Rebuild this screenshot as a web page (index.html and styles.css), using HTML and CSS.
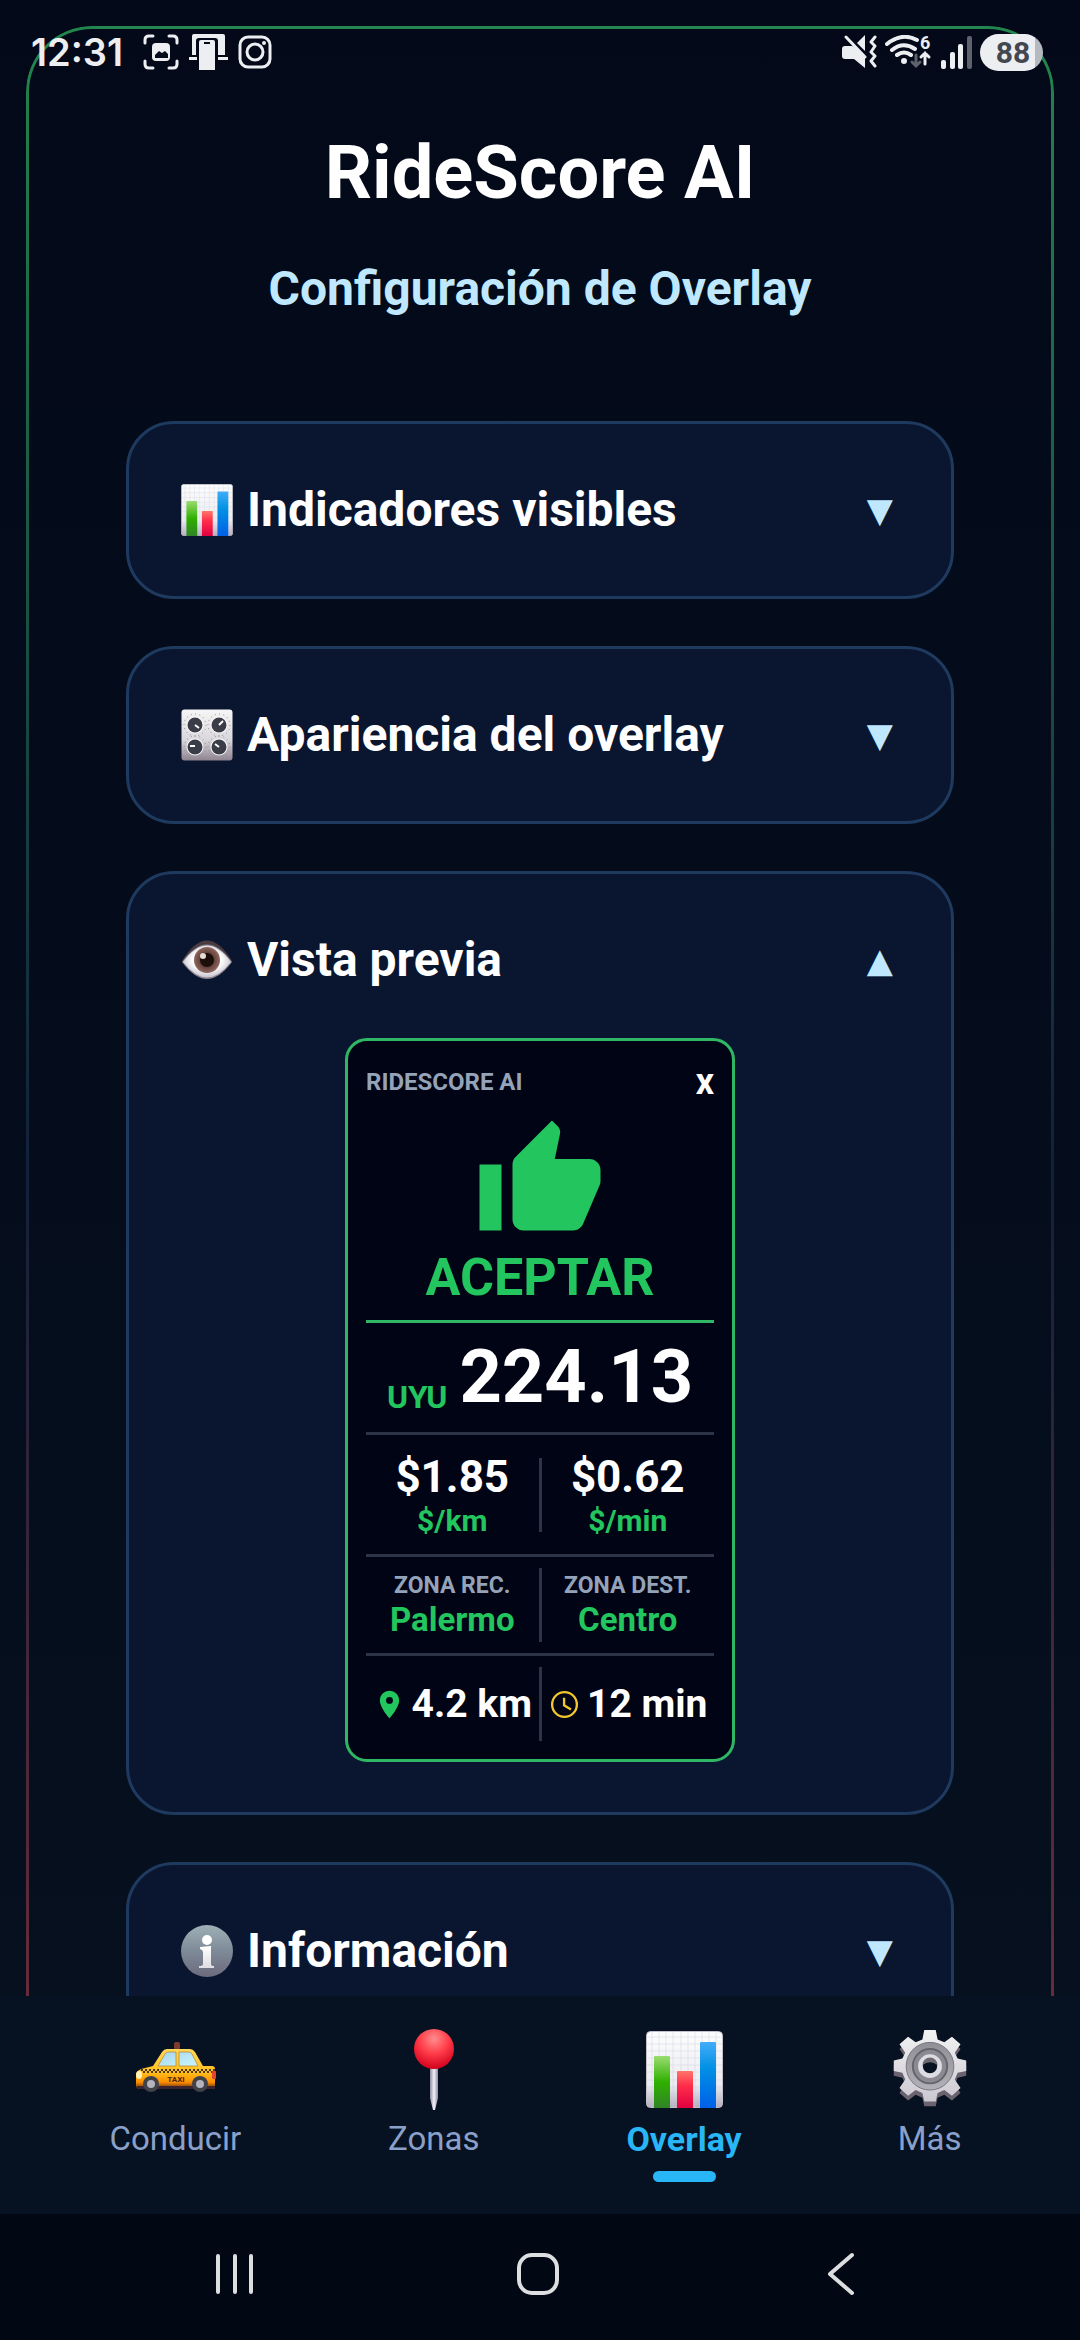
FILE: index.html
```
<!DOCTYPE html>
<html lang="es">
<head>
    <meta charset="UTF-8">
    <meta name="viewport" content="width=device-width, initial-scale=1.0">
    <title>RideScore AI</title>
    <link rel="stylesheet" href="styles.css">
</head>
<body>
    <!-- Iconos compartidos -->
    <svg class="sprite" aria-hidden="true">
        <defs>
            <linearGradient id="paper" x1="0" y1="0" x2="0" y2="1">
                <stop offset="0" stop-color="#fdfdfd"/><stop offset="0.7" stop-color="#ececf0"/><stop offset="1" stop-color="#b5adbd"/>
            </linearGradient>
            <linearGradient id="barGreen" x1="0" y1="0" x2="0" y2="1">
                <stop offset="0" stop-color="#9bdc70"/><stop offset="0.5" stop-color="#2fb000"/><stop offset="1" stop-color="#2f8426"/>
            </linearGradient>
            <linearGradient id="barRed" x1="0" y1="0" x2="0" y2="1">
                <stop offset="0" stop-color="#ff756a"/><stop offset="0.4" stop-color="#ff2d4a"/><stop offset="1" stop-color="#e00040"/>
            </linearGradient>
            <linearGradient id="barBlue" x1="0" y1="0" x2="0" y2="1">
                <stop offset="0" stop-color="#43adf8"/><stop offset="0.4" stop-color="#0090e4"/><stop offset="1" stop-color="#0060e8"/>
            </linearGradient>
            <linearGradient id="metal" x1="0" y1="0" x2="0" y2="1">
                <stop offset="0" stop-color="#f6f6f6"/><stop offset="0.6" stop-color="#d9d7dc"/><stop offset="1" stop-color="#8e8290"/>
            </linearGradient>
            <linearGradient id="gearFace" x1="0" y1="0" x2="0" y2="1">
                <stop offset="0" stop-color="#f2f2f2"/><stop offset="1" stop-color="#cbc8d2"/>
            </linearGradient>
            <linearGradient id="infoBg" x1="0" y1="0" x2="0" y2="1">
                <stop offset="0" stop-color="#9fb0b6"/><stop offset="0.5" stop-color="#7e8a98"/><stop offset="1" stop-color="#6c6a7c"/>
            </linearGradient>
            <linearGradient id="infoFg" x1="0" y1="0" x2="0" y2="1">
                <stop offset="0" stop-color="#ffffff"/><stop offset="1" stop-color="#dddde2"/>
            </linearGradient>
            <linearGradient id="taxiBody" x1="0" y1="0" x2="0" y2="1">
                <stop offset="0" stop-color="#ffd75a"/><stop offset="0.6" stop-color="#ffbf1c"/><stop offset="0.85" stop-color="#ff8e00"/><stop offset="1" stop-color="#6d3413"/>
            </linearGradient>
            <linearGradient id="glass" x1="0" y1="0" x2="1" y2="1">
                <stop offset="0" stop-color="#a6d4ea"/><stop offset="1" stop-color="#c9f6ff"/>
            </linearGradient>
            <radialGradient id="ball" cx="0.5" cy="0.25" r="0.75">
                <stop offset="0" stop-color="#ff8d8d"/><stop offset="0.5" stop-color="#ff3b48"/><stop offset="1" stop-color="#d0001c"/>
            </radialGradient>
            <linearGradient id="needle" x1="0" y1="0" x2="1" y2="0">
                <stop offset="0" stop-color="#8f8c9f"/><stop offset="0.5" stop-color="#f2f1fb"/><stop offset="1" stop-color="#8f8c9f"/>
            </linearGradient>
            <radialGradient id="eyeWhite" cx="0.5" cy="0.45" r="0.6">
                <stop offset="0.5" stop-color="#ffffff"/><stop offset="1" stop-color="#b9b4c2"/>
            </radialGradient>
            <radialGradient id="iris">
                <stop offset="0.4" stop-color="#54352f"/><stop offset="1" stop-color="#8f675e"/>
            </radialGradient>
            <linearGradient id="gearRing" x1="0" y1="0" x2="0" y2="1">
                <stop offset="0" stop-color="#8f8f95"/><stop offset="1" stop-color="#b2b0b8"/>
            </linearGradient>
        </defs>
        <symbol id="chart" viewBox="0 0 77 77">
            <rect x="0.5" y="0.5" width="76" height="76" rx="4" fill="url(#paper)" stroke="#c4c0ca"/>
            <path d="M6 1v75M13 1v75M20 1v75M27 1v75M35 1v75M42 1v75M49 1v75M56 1v75M63 1v75M70 1v75M1 6h75M1 13h75M1 20h75M1 27h75M1 34h75M1 41h75M1 49h75M1 56h75M1 63h75" stroke="#c5cbe0" stroke-width="0.7" opacity="0.6"/>
            <path d="M8 77V26q0-1 1-1h14q1 0 1 1v51z" fill="url(#barGreen)"/>
            <path d="M31 77V41q0-1 1-1h14q1 0 1 1v36z" fill="url(#barRed)"/>
            <path d="M54 77V12q0-1 1-1h14q1 0 1 1v65z" fill="url(#barBlue)"/>
        </symbol>
        <symbol id="knob" viewBox="0 0 24 24">
            <circle cx="12" cy="12" r="11" fill="none" stroke="#8d8a93" stroke-width="1" stroke-dasharray="1 3.300"/>
            <circle cx="12" cy="12" r="8.500" fill="#fafafa"/>
            <circle cx="12" cy="12" r="7.500" fill="#3a3d48"/>
        </symbol>
        <symbol id="gear" viewBox="0 0 82 82">
            <path d="M35 1h12l2 10 7 3 8-6 9 8-6 9 3 6 9 2v11l-9 2-3 7 6 9-9 8-8-6-7 3-2 9H35l-2-9-7-3-8 6-9-8 6-9-3-7-9-2V33l9-2 3-6-6-9 9-8 8 6 7-3z"/>
        </symbol>
    </svg>

    <div class="app">
        <header class="status-bar">
            <div class="status-left">
                <span class="clock">12:31</span>
                <svg width="36" height="36" viewBox="0 0 36 36" fill="none" stroke="#eceef2" stroke-width="3" stroke-linecap="round">
                    <path d="M2 9V6q0-4 4-4h4M26 2h4q4 0 4 4v3M34 27v3q0 4-4 4h-4M10 34H6q-4 0-4-4v-3"/>
                    <rect x="9" y="9" width="18" height="18" rx="4" fill="#eceef2" stroke="none"/>
                    <path d="M12 24v-3l4-4 3 2 3-2 3 3v4z" fill="#040b1a" stroke="none"/>
                </svg>
                <svg width="39" height="36" viewBox="0 0 39 36" fill="#eceef2">
                    <path d="M3 2q0-2 2-2h29q2 0 2 2v19h-7V7q0-3-3-3H10q-3 0-3 3v14H3zM0 23h8v3H0zM29 23h10v3H29z"/>
                    <path d="M10 8q0-2 2-2h12q2 0 2 2v28H10z"/>
                    <path d="M15 8h6v2h-6z" fill="#040b1a"/>
                </svg>
                <svg width="34" height="34" viewBox="0 0 34 34" fill="none" stroke="#eceef2" stroke-width="3">
                    <rect x="2" y="2" width="30" height="30" rx="8"/>
                    <circle cx="17" cy="17" r="8"/>
                    <circle cx="26" cy="8" r="2" fill="#eceef2" stroke="none"/>
                </svg>
            </div>
            <div class="status-right">
                <svg width="35" height="34" viewBox="0 0 35 34" fill="#eceef2">
                    <path d="M0 14q0-3 3-3h7l3 1 10 10v11l-11-9H3q-3 0-3-3zM15 8l8-8v16z"/>
                    <path d="M4 2l19 20" stroke="#eceef2" stroke-width="3" stroke-linecap="round"/>
                    <path d="M33 2l-4 5 4 4-4 6 4 4-4 5 4 5" fill="none" stroke="#eceef2" stroke-width="3" stroke-linecap="round" stroke-linejoin="round"/>
                </svg>
                <svg width="48" height="34" viewBox="0 0 48 34" fill="none" stroke="#eceef2" stroke-width="4" stroke-linecap="round">
                    <path d="M2 9Q17-3 32 5M7 15Q18 6 30 14M12 20Q19 15 26 20" />
                    <circle cx="19" cy="26" r="3" fill="#eceef2" stroke="none"/>
                    <path d="M31 20v10M27 27l4 4 4-4" stroke="#5d626d" stroke-width="3"/>
                    <path d="M40 29V18M36 22l4-4 4 4" stroke-width="3"/>
                    <text x="35" y="14" class="wifi-gen">6</text>
                </svg>
                <svg width="31" height="33" viewBox="0 0 31 33" fill="#eceef2">
                    <rect x="0" y="24" width="5" height="9" rx="2"/>
                    <rect x="9" y="16" width="5" height="17" rx="2"/>
                    <rect x="17" y="8" width="5" height="25" rx="2"/>
                    <rect x="26" y="0" width="5" height="33" rx="2" fill="#5d626d"/>
                </svg>
                <span class="battery">88</span>
            </div>
        </header>

        <main class="content">
            <h1>RideScore AI</h1>
            <h2 class="subtitle">Configuración de Overlay</h2>

            <section class="card">
                <button class="card-header" type="button" aria-expanded="false">
                    <svg class="card-icon"><use href="#chart"/></svg>
                    <span class="card-title">Indicadores visibles</span>
                    <span class="arrow">▼</span>
                </button>
            </section>

            <section class="card">
                <button class="card-header" type="button" aria-expanded="false">
                    <svg class="card-icon" viewBox="0 0 52 52">
                        <rect x="0.5" y="0.5" width="51" height="51" rx="3" fill="url(#metal)"/>
                        <use href="#knob" x="2" y="4" width="24" height="24"/>
                        <use href="#knob" x="26" y="4" width="24" height="24"/>
                        <use href="#knob" x="2" y="26" width="24" height="24"/>
                        <use href="#knob" x="26" y="26" width="24" height="24"/>
                        <path d="M14 16l4 3M38 16l4-4M14 37H9M38 38l-4-3" stroke="#fff" stroke-width="2"/>
                    </svg>
                    <span class="card-title">Apariencia del overlay</span>
                    <span class="arrow">▼</span>
                </button>
            </section>

            <section class="card">
                <button class="card-header" type="button" aria-expanded="true">
                    <svg class="card-icon" viewBox="0 0 52 52">
                        <path d="M1 27Q26-14 51 27Q26 62 1 27z" fill="#4a3b40"/>
                        <path d="M1 28Q26-7 51 28Q26 62 1 28z" fill="#85808c"/>
                        <path d="M2 28Q26-5 50 28Q26 59 2 28z" fill="url(#eyeWhite)"/>
                        <circle cx="26" cy="26" r="13" fill="url(#iris)"/>
                        <circle cx="26" cy="26" r="7" fill="#1c0f0a"/>
                        <circle cx="22" cy="22" r="3" fill="#e8dcd6"/>
                    </svg>
                    <span class="card-title">Vista previa</span>
                    <span class="arrow">▲</span>
                </button>

                <div class="preview">
                    <div class="preview-header">
                        <span class="brand">RIDESCORE AI</span>
                        <button class="close" type="button" aria-label="Cerrar">X</button>
                    </div>
                    <svg class="thumb" viewBox="0 0 24 24" fill="#22c55e">
                        <path d="M1 21h4V9H1v12zm22-11c0-1.100-.9-2-2-2h-6.310l.95-4.570.03-.32c0-.41-.17-.79-.44-1.060L14.170 1 7.590 7.590C7.220 7.950 7 8.450 7 9v10c0 1.100.9 2 2 2h9c.83 0 1.540-.5 1.840-1.220l3.020-7.050c.09-.23.14-.47.14-.73v-2z"/>
                    </svg>
                    <div class="verdict">ACEPTAR</div>
                    <div class="price">
                        <span class="currency">UYU</span>
                        <span class="amount">224.13</span>
                    </div>
                    <div class="row rates">
                        <div class="cell">
                            <div class="rate">$1.85</div>
                            <div class="unit">$/km</div>
                        </div>
                        <div class="cell">
                            <div class="rate">$0.62</div>
                            <div class="unit">$/min</div>
                        </div>
                    </div>
                    <div class="row zones">
                        <div class="cell">
                            <div class="zone-label">ZONA REC.</div>
                            <div class="zone-name">Palermo</div>
                        </div>
                        <div class="cell">
                            <div class="zone-label">ZONA DEST.</div>
                            <div class="zone-name">Centro</div>
                        </div>
                    </div>
                    <div class="row trip">
                        <div class="cell">
                            <svg width="33" height="33" viewBox="0 0 24 24" fill="#22c55e">
                                <path d="M12 2C8.130 2 5 5.130 5 9c0 5.250 7 13 7 13s7-7.750 7-13c0-3.870-3.130-7-7-7zm0 9.500a2.500 2.500 0 1 1 0-5 2.500 2.500 0 0 1 0 5z"/>
                            </svg>
                            <span>4.2 km</span>
                        </div>
                        <div class="cell">
                            <svg width="33" height="33" viewBox="0 0 24 24" fill="none" stroke="#f2c72e" stroke-width="1.700">
                                <circle cx="12" cy="12" r="9"/>
                                <path d="M11.700 7v5.600l5 3"/>
                            </svg>
                            <span>12 min</span>
                        </div>
                    </div>
                </div>
            </section>

            <section class="card">
                <button class="card-header" type="button" aria-expanded="false">
                    <svg class="card-icon" viewBox="0 0 52 52">
                        <circle cx="26" cy="26" r="26" fill="url(#infoBg)"/>
                        <circle cx="26" cy="15" r="5" fill="#fff"/>
                        <path d="M19 22l11-1v18q0 2 3 2v2H18v-2q4 0 4-2V27q0-2-3-3z" fill="url(#infoFg)"/>
                    </svg>
                    <span class="card-title">Información</span>
                    <span class="arrow">▼</span>
                </button>
            </section>
        </main>

        <nav class="tab-bar">
            <a class="tab" href="#conducir">
                <svg class="tab-icon" viewBox="0 0 82 82">
                    <rect x="40" y="13" width="6" height="8" rx="2" fill="#7c3b2c"/>
                    <path d="M2 46q0-4 5-6l12-3 9-14q2-3 5-3h23q3 0 5 3l8 14h9q3 0 3 3v17q0 2-3 2H4q-2 0-2-2z" fill="url(#taxiBody)"/>
                    <path d="M24 37l7-12q1-2 3-2h8v14zM45 37V23h10q2 0 3 2l6 12z" fill="url(#glass)" stroke="#b98c35" stroke-width="0.8"/>
                    <path d="M7 41h74" stroke="#4d381c" stroke-width="2" stroke-dasharray="2 2"/>
                    <path d="M9 43h72" stroke="#4d381c" stroke-width="2" stroke-dasharray="2 2"/>
                    <ellipse cx="5" cy="46" rx="3" ry="4" fill="#fff3b8"/>
                    <rect x="78" y="42" width="4" height="8" rx="1" fill="#e5432b"/>
                    <rect x="3" y="57" width="78" height="3" fill="#3b2530"/>
                    <text x="42" y="53" text-anchor="middle" class="taxi-sign">TAXI</text>
                    <circle cx="17" cy="55" r="8" fill="#424148"/><circle cx="17" cy="55" r="4" fill="#b5b3bd"/>
                    <circle cx="66" cy="55" r="8" fill="#424148"/><circle cx="66" cy="55" r="4" fill="#b5b3bd"/>
                </svg>
                <span class="tab-label">Conducir</span>
            </a>
            <a class="tab" href="#zonas">
                <svg class="tab-icon" viewBox="0 0 82 82">
                    <path d="M37 38h8v31l-3 12h-2l-3-12z" fill="url(#needle)"/>
                    <circle cx="41" cy="20" r="20" fill="url(#ball)"/>
                </svg>
                <span class="tab-label">Zonas</span>
            </a>
            <a class="tab active" href="#overlay" aria-current="page">
                <svg class="tab-icon" viewBox="0 0 82 82"><use href="#chart" x="3" y="2" width="77" height="77"/></svg>
                <span class="tab-label">Overlay</span>
            </a>
            <a class="tab" href="#mas">
                <svg class="tab-icon" viewBox="-2 0 86 86">
                    <use href="#gear" y="5" width="82" height="82" fill="#6b6270"/>
                    <use href="#gear" width="82" height="82" fill="url(#gearFace)"/>
                    <circle cx="41" cy="39" r="25" fill="url(#gearRing)" stroke="#77757d"/>
                    <circle cx="41" cy="39" r="18" fill="#8b8991" stroke="#65636b" stroke-width="2"/>
                    <circle cx="41" cy="39" r="10" fill="#071222" stroke="#dddce2" stroke-width="5"/>
                    <path d="M33 38a8 8 0 0 1 16 0q-8-6-16 0z" fill="#6c6971"/>
                </svg>
                <span class="tab-label">Más</span>
            </a>
        </nav>

        <div class="system-nav">
            <button type="button" aria-label="Recientes">
                <svg width="44" height="44" viewBox="0 0 44 44"><path d="M5 4v36M22 4v36M38 4v36"/></svg>
            </button>
            <button type="button" aria-label="Inicio">
                <svg width="44" height="44" viewBox="0 0 44 44"><rect x="3" y="3" width="38" height="38" rx="13"/></svg>
            </button>
            <button type="button" aria-label="Atrás">
                <svg width="44" height="44" viewBox="0 0 44 44"><path d="M33 3L11 22l22 19"/></svg>
            </button>
        </div>
    </div>
</body>
</html>
```
FILE: styles.css
```
* {
    box-sizing: border-box;
}
body {
    margin: 0;
    font-family: Roboto, "Noto Sans", sans-serif;
    color: #fff;
    background-color: #030918;
}
h1, h2 {
    margin: 0;
}
button {
    font: inherit;
    color: inherit;
    background: none;
    border: none;
    padding: 0;
    cursor: pointer;
}
.sprite {
    display: block;
    width: 0;
    height: 0;
}
.app {
    position: relative;
    display: flex;
    flex-direction: column;
    height: 100vh;
    overflow: hidden;
    background: linear-gradient(#030918, #061120);
}
/* marco verde-rojo alrededor del contenido */
.app::before {
    content: "";
    position: absolute;
    inset: 26px;
    padding: 3px;
    border-radius: 66px;
    background: linear-gradient(#22864e, #12203a 50%, #86303b);
    mask: linear-gradient(#000 0 0) content-box exclude, linear-gradient(#000 0 0);
}

/* barra de estado */
.status-bar {
    position: relative;
    display: flex;
    justify-content: space-between;
    height: 104px;
    padding: 0 37px 0 31px;
}
.status-left, .status-right {
    display: flex;
    align-items: center;
    height: 104px;
    gap: 10px;
}
.status-right {
    gap: 8px;
}
.clock {
    font-family: Inter, sans-serif;
    font-size: 38px;
    font-weight: 600;
    color: #eceef2;
    margin-right: 10px;
}
.wifi-gen {
    font-size: 18px;
    font-weight: 700;
    fill: #eceef2;
    stroke: none;
}
.battery {
    width: 63px;
    height: 37px;
    padding-left: 3px;
    line-height: 37px;
    border-radius: 19px;
    text-align: center;
    font-size: 30px;
    font-weight: 700;
    color: #43474f;
    background: linear-gradient(90deg, #eceef2 87%, #b4b8bf 87%);
}

/* contenido */
.content {
    position: relative;
    flex: 1;
    min-height: 0;
    overflow: hidden;
    padding: 24px 126px 0;
}
h1 {
    font-size: 74px;
    line-height: 90px;
    text-align: center;
}
.subtitle {
    margin: 43px 0 104px;
    font-size: 48px;
    line-height: 56px;
    text-align: center;
    color: #bfe8ff;
}
.card {
    margin-bottom: 47px;
    padding: 50px 52px;
    border: 3px solid #1f3a5f;
    border-radius: 48px;
    background-color: #0a162f;
}
.card-header {
    display: flex;
    align-items: center;
    width: 100%;
    padding: 8px 6px 8px 0;
    text-align: left;
}
.card-icon {
    width: 52px;
    height: 52px;
    margin-right: 14px;
}
.card-title {
    flex: 1;
    font-size: 48px;
    font-weight: 700;
    line-height: 56px;
}
.arrow {
    font-family: "DejaVu Sans", sans-serif;
    font-size: 34px;
    line-height: 56px;
    color: #bfe8ff;
}

/* vista previa del overlay */
.preview {
    width: 390px;
    margin: 42px auto 0;
    padding: 24px 18px 18px;
    border: 3px solid #2fb765;
    border-radius: 22px;
    background-color: #010414;
    font-weight: 700;
    text-align: center;
}
.preview-header {
    display: flex;
    justify-content: space-between;
    align-items: flex-start;
    height: 50px;
}
.brand {
    font-size: 24px;
    line-height: 34px;
    color: #94a3b8;
}
.close {
    font-size: 28px;
    font-weight: 900;
    line-height: 40px;
}
.thumb {
    display: block;
    width: 132px;
    height: 132px;
    margin: 0 auto;
}
.verdict {
    padding-bottom: 11px;
    border-bottom: 3px solid #2fb765;
    font-size: 52px;
    line-height: 62px;
    color: #22c55e;
}
.price {
    display: flex;
    justify-content: center;
    align-items: flex-end;
    gap: 12px;
    padding: 10px 0 11px;
}
.currency {
    padding-bottom: 6px;
    font-size: 32px;
    line-height: 36px;
    color: #22c55e;
}
.amount {
    font-size: 74px;
    line-height: 88px;
}
.row {
    display: flex;
    align-items: center;
    border-top: 3px solid #2e3447;
}
.row::before {
    content: "";
    order: 1;
    width: 3px;
    height: 74px;
    background-color: #2e3447;
}
.cell {
    flex: 1;
}
.cell:last-child {
    order: 2;
}
.rates {
    padding: 16px 0 15px;
}
.zones {
    padding: 11px 0;
}
.rate {
    font-size: 44px;
    line-height: 52px;
}
.unit {
    font-size: 30px;
    line-height: 36px;
    color: #22c55e;
}
.zone-label {
    font-size: 23px;
    line-height: 30px;
    color: #94a3b8;
}
.zone-name {
    font-size: 33px;
    line-height: 38px;
    color: #22c55e;
}
.trip {
    padding-top: 11px;
}
.trip .cell {
    display: flex;
    justify-content: center;
    align-items: center;
    gap: 6px;
    font-size: 39px;
    line-height: 46px;
    white-space: nowrap;
}

/* pestañas */
.tab-bar {
    position: relative;
    display: flex;
    justify-content: space-around;
    height: 218px;
    padding: 33px 36px 0;
    background-color: #061121;
}
.tab {
    display: flex;
    flex-direction: column;
    align-items: center;
    color: #8aa0c8;
    text-decoration: none;
}
.tab-icon {
    width: 82px;
    height: 82px;
    margin-bottom: 9px;
}
.tab-label {
    font-size: 33px;
    line-height: 38px;
}
.taxi-sign {
    font-size: 8px;
    font-weight: 700;
    fill: #4a2608;
}
.tab.active {
    color: #29b6f6;
    font-weight: 700;
}
.tab.active .tab-label {
    font-size: 34px;
}
.tab.active::after {
    content: "";
    width: 63px;
    height: 11px;
    margin-top: 13px;
    border-radius: 6px;
    background-color: #29b6f6;
}

.system-nav {
    position: relative;
    display: flex;
    justify-content: space-around;
    align-items: center;
    height: 126px;
    padding: 0 88px 6px 84px;
    background-color: #020813;
}
.system-nav button {
    display: flex;
}
.system-nav svg {
    fill: none;
    stroke: #dcdee0;
    stroke-width: 4;
    stroke-linecap: round;
    stroke-linejoin: round;
}
```
